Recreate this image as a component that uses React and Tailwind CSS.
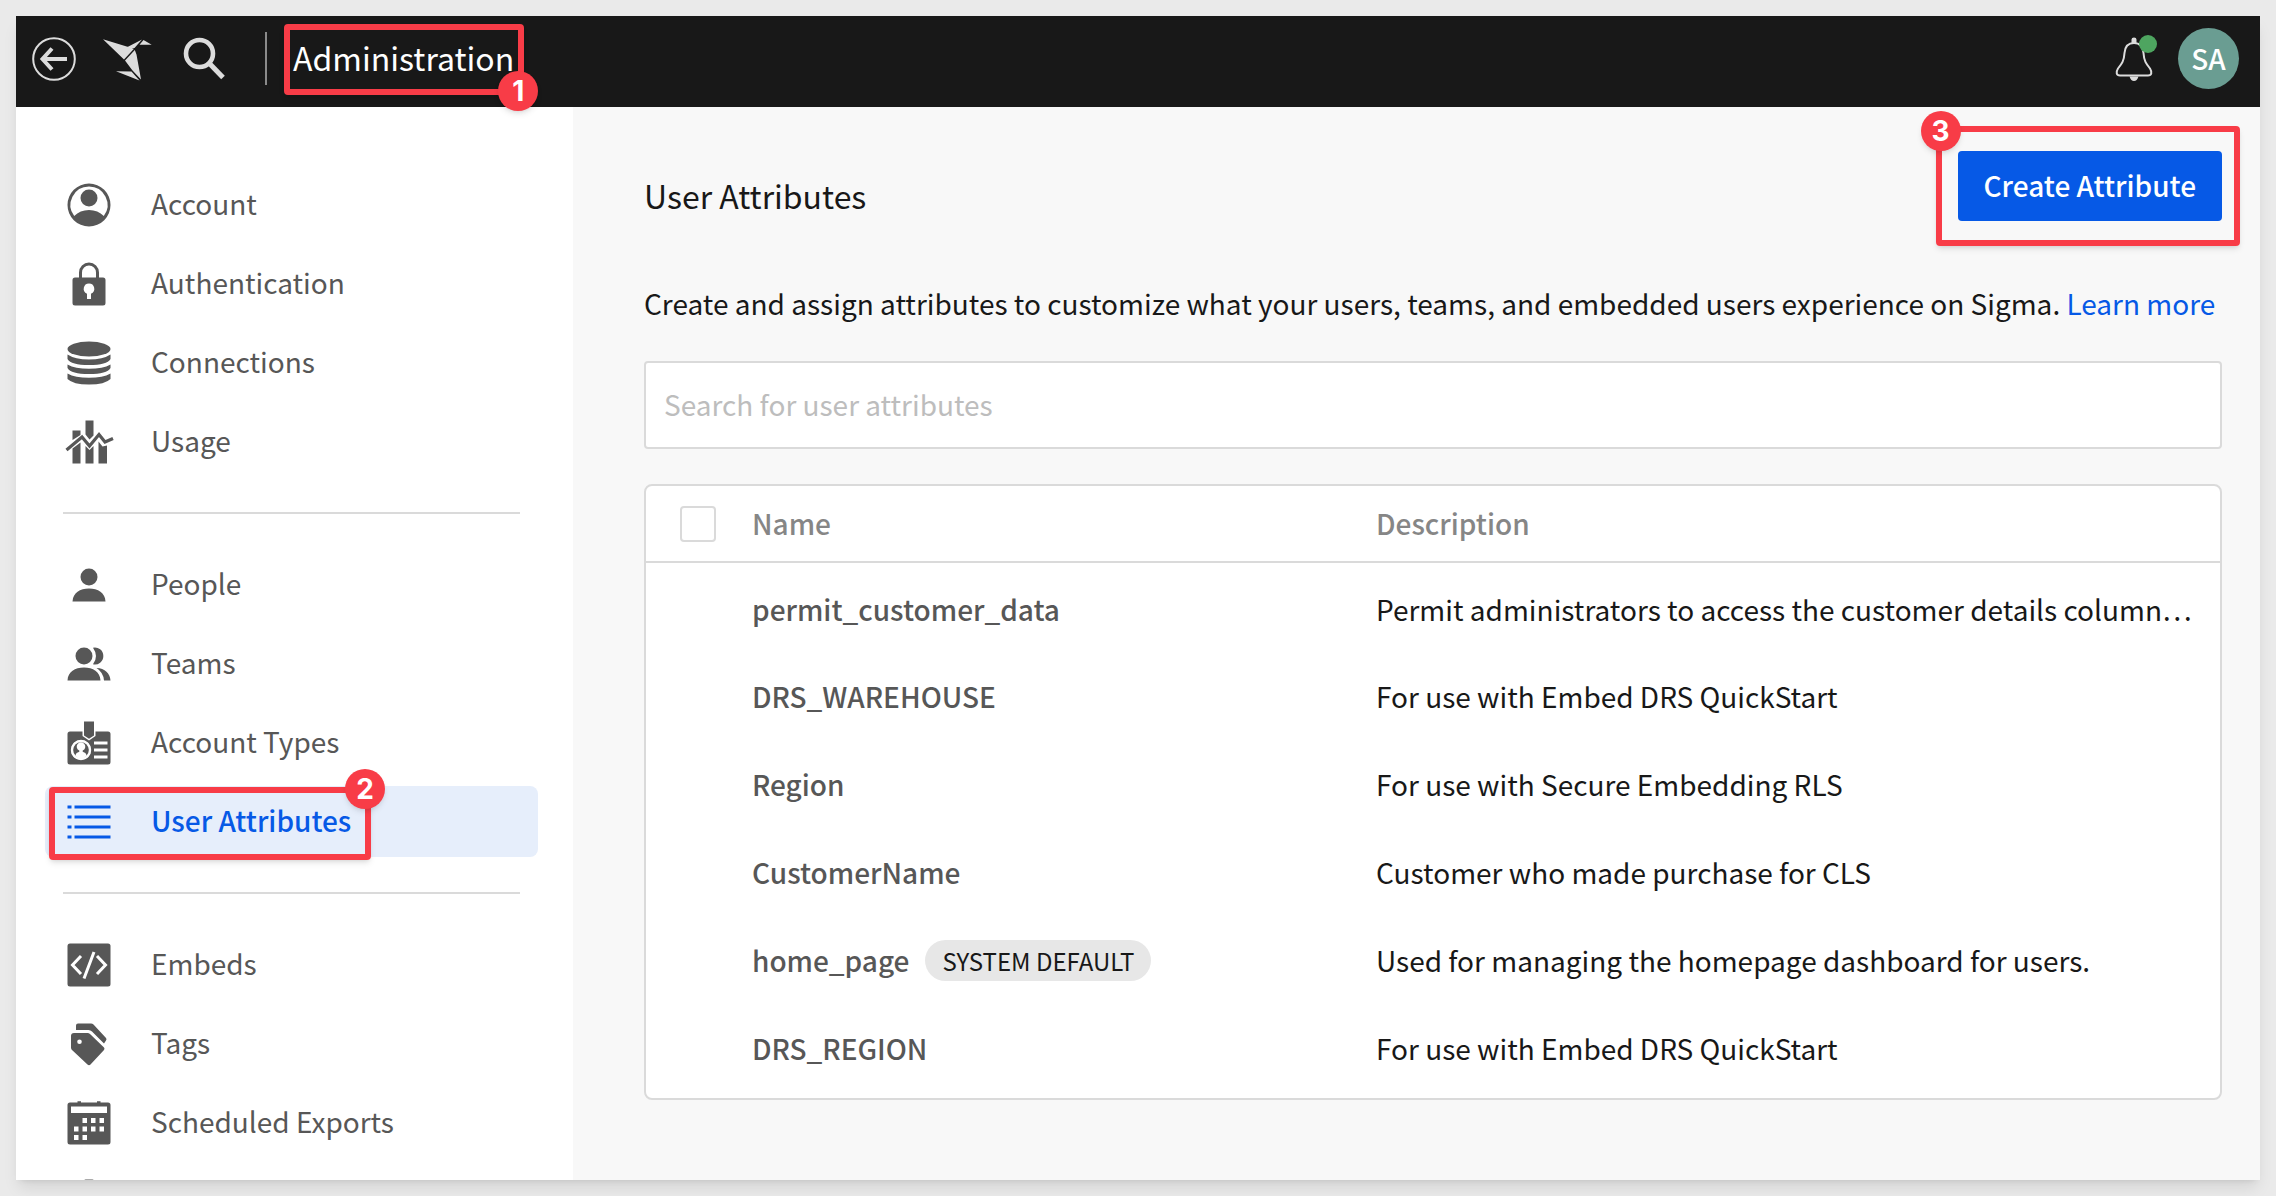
import React from "react";

const FONT = "font-['Noto_Sans_CJK_KR',sans-serif]";

function Icon({ children, className = "size-11", box = "0 0 44 44" }) {
  return (
    <svg viewBox={box} className={`${className} shrink-0`} fill="currentColor" aria-hidden="true">
      {children}
    </svg>
  );
}

const AccountIcon = () => (
  <Icon>
    <path fillRule="evenodd" d="M22 .5a21.500 21.500 0 1 0 0 43a21.500 21.500 0 1 0 0-43M22 3.500a18.500 18.500 0 0 1 14.800 29.600Q31 27 22 27T7.200 33.100A18.500 18.500 0 0 1 22 3.500" />
    <circle cx="22" cy="15" r="8.500" />
  </Icon>
);
const LockIcon = () => (
  <Icon>
    <path d="M13.500 16v-5.500a8.500 8.500 0 0 1 17 0V16" fill="none" stroke="currentColor" strokeWidth="3" />
    <path fillRule="evenodd" d="M8 15.500h28q2.500 0 2.500 2.500v23q0 2.500-2.500 2.500H8q-2.500 0-2.500-2.500V18q0-2.500 2.500-2.500M22 21.500a5.300 5.300 0 0 0-2 10.200V37h4v-5.300a5.300 5.300 0 0 0-2-10.200" />
  </Icon>
);
const DatabaseIcon = () => (
  <Icon>
    <ellipse cx="22" cy="8" rx="21.500" ry="7.500" />
    <path d="M.5 13.500Q8 18.500 22 18.500T43.500 13.500V18Q40 24 22 24T.5 18zM.5 23.500Q8 27.800 22 27.800T43.500 23.500V27Q40 33 22 33T.5 27zM.5 32.500Q8 36.800 22 36.800T43.500 32.500V38Q38 43.500 22 43.500T.5 38z" />
  </Icon>
);
const UsageIcon = () => (
  <Icon className="size-11 overflow-visible">
    <path d="M5.500 10.500h8v4.500l-8 5zM18.500 0.500h8v15l-4 4-4-5zM5.500 28.500l8-6v21h-8zM18.500 26l4 4 4-4v17.500h-8zM31.500 21.500l4 5 4.500-1v18h-8.500z" />
    <path d="M-.5 30L15 17l7.500 9L32 14.500l6 7.500 8-3.500" fill="none" stroke="currentColor" strokeWidth="3.200" />
  </Icon>
);
const PersonIcon = () => (
  <Icon>
    <circle cx="22" cy="14" r="8.500" />
    <path d="M5.500 38.500C6 29.500 13 25.500 22 25.500s16 4 16.500 13z" />
  </Icon>
);
const TeamsIcon = () => (
  <Icon>
    <circle cx="17" cy="14" r="8.500" />
    <path d="M.5 38.500C1 29.500 8 25.500 17 25.500s16 4 16.500 13zM26 5.700a8.500 8.500 0 1 1 0 16.600q6-8 0-16.600M29.500 26C38 26.500 43 31 43.500 38.500H37Q36.500 30.500 29.500 26" />
  </Icon>
);
const BadgeIcon = () => (
  <Icon className="size-11 overflow-visible">
    <path fillRule="evenodd" d="M3 10.500h12.500v4.500l6.500 4.500 6.500-4.500v-4.500H41q2.500 0 2.500 2.500v28q0 2.500-2.500 2.500H3q-2.500 0-2.500-2.500V13q0-2.500 2.500-2.500M27 20.500v3h13.500v-3zM27 27.500v3h13.500v-3zM27 34.500v3h13.500v-3zM14 19a10 10 0 1 0 0 20a10 10 0 1 0 0-20" />
    <path d="M17 .5h10v14l-5 3.300-5-3.300z" />
    <circle cx="14" cy="29" r="9" fill="none" stroke="#fff" strokeWidth="2.400" />
    <circle cx="14" cy="29" r="7.800" />
    <path d="M8.200 34.500Q9 31.500 12.300 30.800V29.500a4.300 4.300 0 1 1 3.400 0v1.300Q19 31.500 19.800 34.500 17.500 37.500 14 37.500T8.200 34.500" fill="#fff" />
  </Icon>
);
const ListIcon = () => (
  <Icon>
    <path d="M.5 5.500h4v3h-4zM7.500 5.500h36v3h-36zM.5 15.500h4v3h-4zM7.500 15.500h36v3h-36zM.5 25.500h4v3h-4zM7.500 25.500h36v3h-36zM.5 35.500h4v3h-4zM7.500 35.500h36v3h-36z" />
  </Icon>
);
const EmbedIcon = () => (
  <Icon>
    <rect x=".5" y=".5" width="43" height="43" rx="2.500" />
    <path d="M14 13L5.500 22l8.500 9M30 13l8.500 9-8.500 9M27 9L17 35.500" fill="none" stroke="#fff" strokeWidth="3" />
  </Icon>
);
const TagsIcon = () => (
  <Icon>
    <path fillRule="evenodd" d="M7 11h13.500q1.500 0 2.500 1L37 25.500q1 1.200 0 2.500L23.500 42.500q-1.500 1.400-3 0L5 28q-1-1-1-2.500V14q0-3 3-3M12.500 17.500a2.300 2.300 0 1 0 0 4.600a2.300 2.300 0 1 0 0-4.600" />
    <path d="M9 8V3.500q0-2 2-2h13q1.500 0 2.500 1L39 16q1 1.200 0 2.500L37 21.500 25 9.500Q23.500 8 21.500 8z" />
  </Icon>
);
const CalendarIcon = () => (
  <Icon>
    <path fillRule="evenodd" d="M3 1.500h7.500V.300h3.500v1.200h16V.300h3.500v1.200H41q2.500 0 2.500 2.500v37q0 2.500-2.500 2.500H3q-2.500 0-2.500-2.500V4q0-2.500 2.500-2.500M4 5.500v6.500h36V5.500zM15.500 17v5h4.500v-5zM24 17v5h4.500v-5zM32.500 17v5H37v-5zM7 25.500v5h4.500v-5zM15.500 25.500v5h4.500v-5zM24 25.500v5h4.500v-5zM32.500 25.500v5H37v-5zM7 34v5h4.500v-5zM15.500 34v5h4.500v-5z" />
  </Icon>
);
const GearIcon = () => (
  <Icon className="size-11 overflow-visible">
    <path d="M17 7V1q0-1.500 1.500-1.500h7Q27-.5 27 1v6l10 5v20l-15 11L7 32V12z" />
  </Icon>
);

const groups = [
  [
    ["Account", AccountIcon],
    ["Authentication", LockIcon],
    ["Connections", DatabaseIcon],
    ["Usage", UsageIcon],
  ],
  [
    ["People", PersonIcon],
    ["Teams", TeamsIcon],
    ["Account Types", BadgeIcon],
    ["User Attributes", ListIcon],
  ],
  [
    ["Embeds", EmbedIcon],
    ["Tags", TagsIcon],
    ["Scheduled Exports", CalendarIcon],
    ["", GearIcon],
  ],
];

const attributes = [
  ["permit_customer_data", "Permit administrators to access the customer details column…"],
  ["DRS_WAREHOUSE", "For use with Embed DRS QuickStart"],
  ["Region", "For use with Secure Embedding RLS"],
  ["CustomerName", "Customer who made purchase for CLS"],
  ["home_page", "Used for managing the homepage dashboard for users.", true],
  ["DRS_REGION", "For use with Embed DRS QuickStart"],
];

function Callout({ n, box, badge }) {
  return (
    <span className={`pointer-events-none absolute z-10 rounded-sm border-6 border-[#f83c47] shadow-md ${box}`}>
      <span
        className={`absolute flex size-10 items-center justify-center rounded-full bg-[#f83c47] font-['Inter',sans-serif] text-[28px] leading-none font-bold text-white shadow-md ${badge}`}
      >
        {n}
      </span>
    </span>
  );
}

function Header() {
  return (
    <header className="flex h-[91px] shrink-0 items-center bg-[#181818] pr-[21px] pb-1.5 pl-4 text-[#dcdcdc]">
      <button aria-label="Back" className="size-11">
        <Icon>
          <circle cx="22" cy="22" r="20.800" fill="none" stroke="currentColor" strokeWidth="2" />
          <path d="M35 22H11M20 11.500L10.500 22l9.500 10.500" fill="none" stroke="currentColor" strokeWidth="4" />
        </Icon>
      </button>
      <a href="#home" aria-label="Home" className="ml-[26px] block">
        <Icon className="h-11 w-[50px]" box="0 0 50 44">
          <path d="M1 2.300L32 11.700 22 22.500zM24.500 10.500L40 2.500 32.500 11zM41.500 3L49.700 7.700H37.500zM23 23.500L32.800 13 34.500 17.500 39 42.500 30.500 33.500zM14 34.300L29.500 34.500 37.500 43.500z" />
        </Icon>
      </a>
      <button aria-label="Search" className="ml-[31px] size-11">
        <Icon>
          <circle cx="16.500" cy="16.500" r="13.500" fill="none" stroke="currentColor" strokeWidth="4.600" />
          <path d="M26.500 26.500L40 40.500" fill="none" stroke="currentColor" strokeWidth="5" />
        </Icon>
      </button>
      <span className="ml-[38px] h-[53px] w-0.5 bg-[#8a8a8a]" />
      <div className="relative ml-[26px]">
        <span className="block pb-1 text-[32px] leading-[44px] text-white">Administration</span>
        <Callout n="1" box="-left-[9px] -right-2.5 -top-[11px] -bottom-3" badge="-right-5 -bottom-[22px]" />
      </div>
      <button aria-label="Notifications" className="relative ml-auto">
        <Icon className="h-11 w-[38px]" box="0 0 38 44">
          <path d="M19 6c-6.500 0-9 4-9.500 10C9 24 7 26.500 3 31.500c-2.500 4-1.500 7 2 7h28c3.500 0 4.500-3 2-7C31 26.500 29 24 28.500 16 28 10 25.500 6 19 6z" fill="none" stroke="currentColor" strokeWidth="2" />
          <path d="M16.500 6V2.500Q16.500.5 19 .5t2.500 2V6zM14.500 39.500h9q-1.500 4.500-4.500 4.500t-4.500-4.500" />
        </Icon>
        <span className="absolute -top-0.5 -right-1 size-[18px] rounded-full bg-[#4ea560]" />
      </button>
      <button className="ml-[25px] size-[61px] rounded-full bg-[#6a9d92] pb-0.5 text-[28px] font-medium text-white">SA</button>
    </header>
  );
}

function Sidebar() {
  return (
    <nav className="w-[557px] shrink-0 bg-white pt-[62px] pr-[35px] pl-[29px]">
      {groups.map((items, g) => (
        <div key={g}>
          {g > 0 && <hr className="mx-[18px] my-[35px] border-t-2 border-[#dadada]" />}
          <ul className="flex flex-col gap-2">
            {items.map(([label, Glyph]) => {
              const active = label === "User Attributes";
              return (
                <li key={label} className="relative">
                  <a
                    href="#section"
                    aria-label={label || "Settings"}
                    aria-current={active ? "page" : undefined}
                    className={`flex h-[71px] items-center gap-10 rounded-lg pl-[22px] text-[28px] ${active ? "bg-[#e6eefb] font-medium text-[#0659e6]" : "text-[#575757]"}`}
                  >
                    <Glyph />
                    {label && <span className="pb-1">{label}</span>}
                  </a>
                  {active && <Callout n="2" box="left-1 top-px -bottom-[3px] w-[322px]" badge="-top-6 -right-5" />}
                </li>
              );
            })}
          </ul>
        </div>
      ))}
    </nav>
  );
}

function AttributeTable() {
  return (
    <div className="mt-[35px] rounded-lg border-2 border-[#dadada] bg-white pb-2">
      <table className="w-full table-fixed border-collapse text-left text-[28px]">
        <thead>
          <tr className="h-[76px] border-b-2 border-[#dadada] text-[#868686]">
            <th className="w-[106px] pl-[34px]">
              <input
                type="checkbox"
                aria-label="Select all attributes"
                className="block size-9 appearance-none rounded-sm border-2 border-[#dadada] bg-white"
              />
            </th>
            <th className="w-[624px] pb-0.5 font-medium">Name</th>
            <th className="pb-0.5 font-medium">Description</th>
          </tr>
        </thead>
        <tbody>
          {attributes.map(([name, text, isDefault]) => (
            <tr key={name} className="h-[88px]">
              <td />
              <td className="pt-1 font-medium text-[#575757]">
                <div className="flex items-center gap-4">
                  {name}
                  {isDefault && (
                    <span className="rounded-full bg-[#e7e7e7] px-[17px] text-2xl leading-[41px] font-normal text-[#181818]">
                      SYSTEM DEFAULT
                    </span>
                  )}
                </div>
              </td>
              <td className="pt-1 pr-6 text-[#181818]">{text}</td>
            </tr>
          ))}
        </tbody>
      </table>
    </div>
  );
}

export default function App() {
  return (
    <div className={`${FONT} h-screen bg-[#eaeaea] p-4`}>
      <div className="flex h-full flex-col overflow-hidden shadow-lg">
        <Header />
        <div className="flex min-h-0 flex-1 overflow-hidden bg-white">
          <Sidebar />
          <main className="min-w-0 flex-1 bg-[#f8f8f8] pt-11 pr-[38px] pl-[71px] text-[#181818]">
            <div className="flex items-center justify-between">
              <h1 className="pt-[18px] text-[32px] leading-[48px]">User Attributes</h1>
              <div className="relative">
                <button className="h-[70px] rounded-sm bg-[#0659e6] px-[26px] pb-0.5 text-[28px] font-medium text-white">
                  Create Attribute
                </button>
                <Callout n="3" box="-left-[22px] -right-[18px] -top-[25px] -bottom-[25px]" badge="-top-[21px] -left-[21px]" />
              </div>
            </div>
            <p className="mt-[61px] text-[28px] leading-[42px]">
              Create and assign attributes to customize what your users, teams, and embedded users experience on Sigma.{" "}
              <a href="#learn" className="text-[#0659e6]">
                Learn more
              </a>
            </p>
            <input
              type="text"
              aria-label="Search for user attributes"
              placeholder="Search for user attributes"
              className="mt-[37px] block h-[88px] w-full rounded-sm border-2 border-[#dadada] bg-white px-[18px] pb-0.5 text-[28px] placeholder:text-[#bdbdbd]"
            />
            <AttributeTable />
          </main>
        </div>
      </div>
    </div>
  );
}
